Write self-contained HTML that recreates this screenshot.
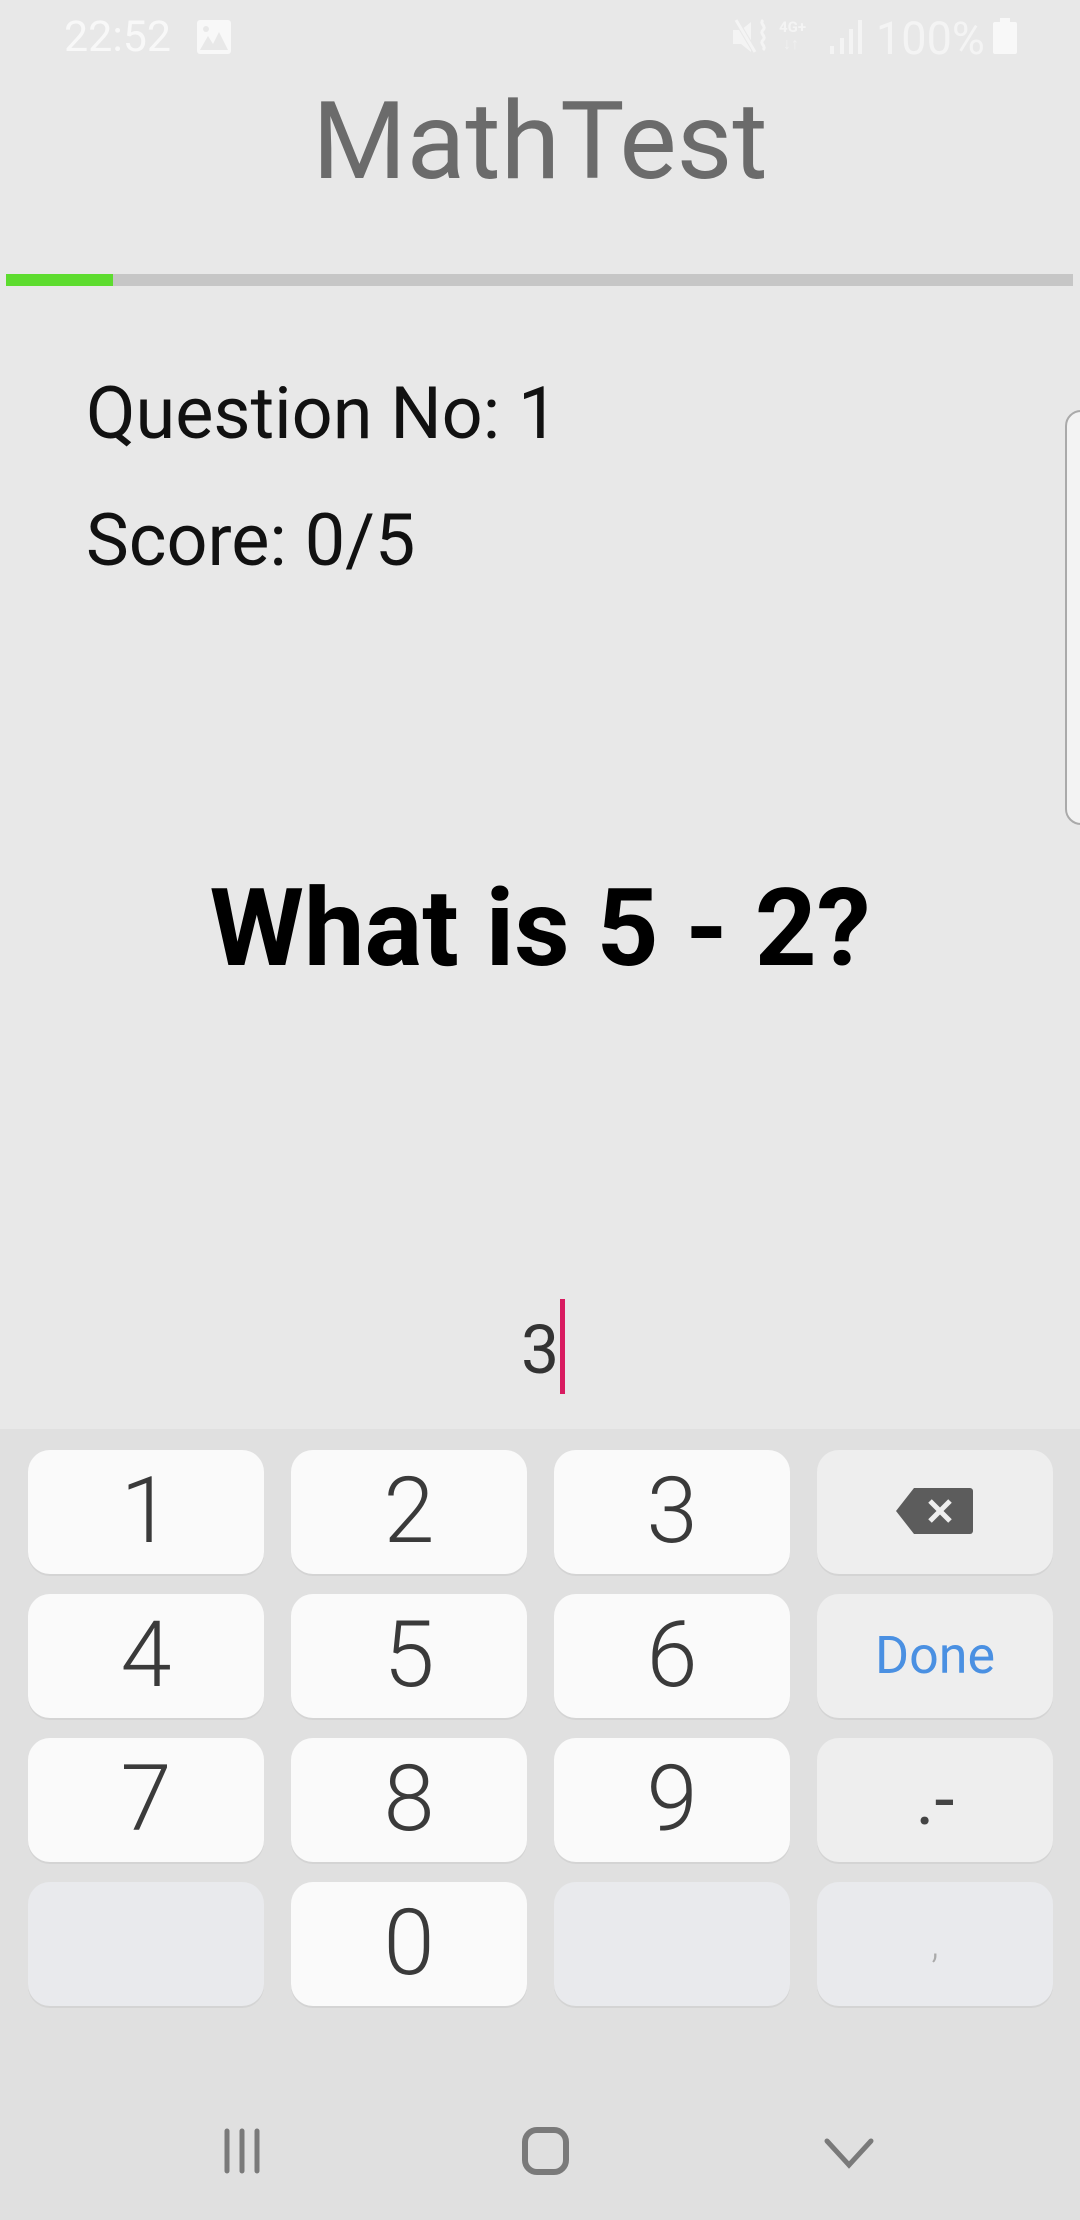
<!DOCTYPE html>
<html><head><meta charset="utf-8"><style>
*{margin:0;padding:0;box-sizing:border-box}
body{width:1080px;height:2220px;background:#e8e8e8;position:relative;overflow:hidden;font-family:"Roboto","Liberation Sans",sans-serif}
.abs{position:absolute}
.t{position:absolute;white-space:nowrap;line-height:1}
.key{position:absolute;width:236px;height:124px;border-radius:22px;background:#fafafa;color:#3a3a3a;font-size:92px;font-weight:300;text-align:center;line-height:124px;box-shadow:0 2px 0 #d4d4d4}
.fn{background:#eeeeee}
.bl{background:#e9eaed}
</style></head><body>
<div class="t" style="left:64px;top:16px;font-size:43px;color:#f8f8f8">22:52</div>
<svg class="abs" style="left:196px;top:19px" width="36" height="36" viewBox="0 0 36 36"><rect x="1" y="1" width="34" height="34" rx="3" fill="#f8f8f8"/><circle cx="10" cy="10" r="3" fill="#e8e8e8"/><path d="M4 31 L12 17 L17 25 L23 13 L32 31 Z" fill="#e8e8e8"/></svg>
<svg class="abs" style="left:733px;top:18px" width="36" height="38" viewBox="0 0 36 38"><path d="M0 12h8l10-8v30l-10-8H0z" fill="#f4f4f4"/><path d="M3 2L22 34" stroke="#e8e8e8" stroke-width="5"/><path d="M3 2L22 34" stroke="#f4f4f4" stroke-width="3"/><path d="M30 2c-4 4 4 6 0 10s4 6 0 10 4 6 0 10" stroke="#f4f4f4" stroke-width="3" fill="none"/></svg>
<div class="t" style="left:779px;top:20px;font-size:15px;font-weight:bold;color:#f4f4f4">4G+</div>
<div class="t" style="left:783px;top:36px;font-size:16px;color:#f0f0f0">↓↑</div>
<svg class="abs" style="left:830px;top:20px" width="32" height="34"><rect x="0" y="26" width="4" height="8" fill="#f4f4f4"/><rect x="10" y="18" width="4" height="16" fill="#f4f4f4"/><rect x="19" y="9" width="4" height="25" fill="#f4f4f4"/><rect x="28" y="0" width="4" height="34" fill="#f4f4f4"/></svg>
<div class="t" style="left:876px;top:16px;font-size:45px;color:#f4f4f4">100%</div>
<svg class="abs" style="left:993px;top:18px" width="24" height="36"><rect x="7" y="0" width="10" height="5" fill="#f8f8f8"/><rect x="0" y="4" width="24" height="32" rx="2" fill="#f8f8f8"/></svg>
<div class="t" style="left:0;width:1080px;text-align:center;top:88px;font-size:108px;color:#6b6b6b">MathTest</div>
<div class="abs" style="left:6px;top:274px;width:1067px;height:12px;background:#c6c6c6"></div>
<div class="abs" style="left:6px;top:274px;width:107px;height:12px;background:#5ddc2f"></div>
<div class="t" style="left:86px;top:378px;font-size:72px;color:#111">Question No: 1</div>
<div class="t" style="left:86px;top:505px;font-size:72px;color:#111">Score: 0/5</div>
<div class="t" style="left:0;width:1080px;text-align:center;top:875px;font-size:108px;font-weight:bold;color:#000">What is 5 - 2?</div>
<div class="abs" style="left:1065px;top:410px;width:40px;height:415px;border:2px solid #aaa;border-radius:16px;background:#f3f3f3"></div>
<div class="t" style="left:521px;top:1316px;font-size:68px;color:#333">3</div>
<div class="abs" style="left:560px;top:1299px;width:5px;height:95px;background:#d81b60"></div>
<div class="abs" style="left:0;top:1429px;width:1080px;height:791px;background:#e0e0e0"></div>
<div class="key" style="left:28px;top:1450px">1</div>
<div class="key" style="left:291px;top:1450px">2</div>
<div class="key" style="left:554px;top:1450px">3</div>
<div class="key fn" style="left:817px;top:1450px"></div>
<svg class="abs" style="left:896px;top:1487px" width="77" height="48" viewBox="0 0 77 48"><path d="M0 24 L18 1 H74 a3 3 0 0 1 3 3 V44 a3 3 0 0 1 -3 3 H18 Z" fill="#5c5c5c"/><path d="M34 14 L54 34 M54 14 L34 34" stroke="#eee" stroke-width="5"/></svg>
<div class="key" style="left:28px;top:1594px">4</div>
<div class="key" style="left:291px;top:1594px">5</div>
<div class="key" style="left:554px;top:1594px">6</div>
<div class="key fn" style="left:817px;top:1594px;color:#4a90e2;font-size:52px;font-weight:400">Done</div>
<div class="key" style="left:28px;top:1738px">7</div>
<div class="key" style="left:291px;top:1738px">8</div>
<div class="key" style="left:554px;top:1738px">9</div>
<div class="key fn" style="left:817px;top:1738px;font-size:72px;font-weight:400;color:#444">.-</div>
<div class="key bl" style="left:28px;top:1882px"></div>
<div class="key" style="left:291px;top:1882px">0</div>
<div class="key bl" style="left:554px;top:1882px"></div>
<div class="key bl" style="left:817px;top:1882px;font-size:40px;color:#aaa">,</div>
<svg class="abs" style="left:220px;top:2128px" width="50" height="46"><path d="M7 3V43M22 3V43M37 3V43" stroke="#7a7a7a" stroke-width="5" stroke-linecap="round"/></svg>
<svg class="abs" style="left:520px;top:2125px" width="52" height="52"><rect x="5" y="5" width="41" height="42" rx="12" fill="none" stroke="#7a7a7a" stroke-width="6"/></svg>
<svg class="abs" style="left:822px;top:2136px" width="54" height="34"><path d="M5 5L27 29L49 5" fill="none" stroke="#7a7a7a" stroke-width="5" stroke-linecap="round"/></svg>
</body></html>
